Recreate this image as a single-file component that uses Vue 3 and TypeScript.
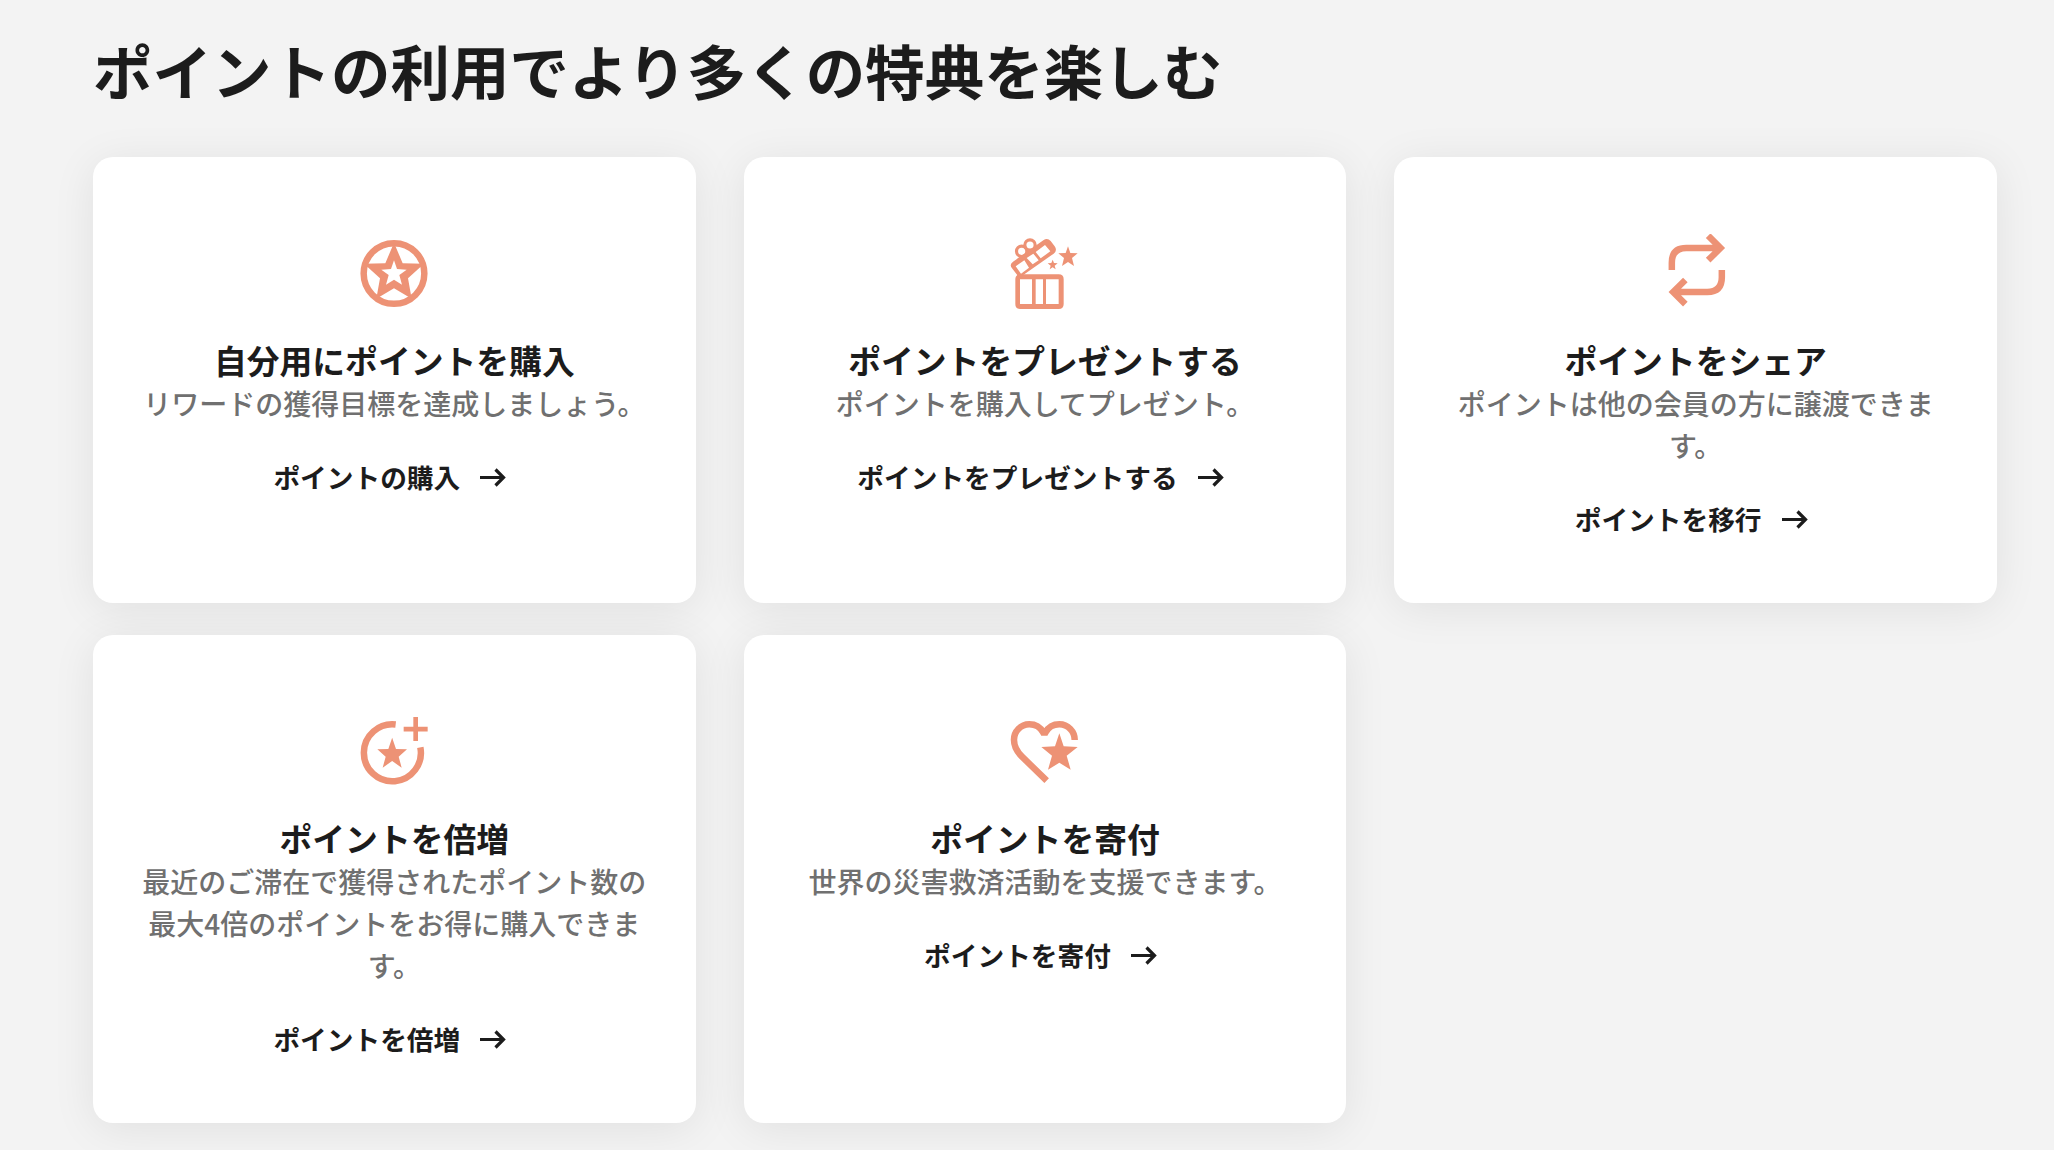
<script setup lang="ts">
type IconName = 'star' | 'gift' | 'share' | 'boost' | 'donate'

interface Benefit {
  icon: IconName
  viewBox: string
  title: string
  body: string
  link: string
}

const benefits: Benefit[] = [
  { icon: 'star', viewBox: '43 42 240 240', title: '自分用にポイントを購入', body: 'リワードの獲得目標を達成しましょう。', link: 'ポイントの購入' },
  { icon: 'gift', viewBox: '45 42 240 240', title: 'ポイントをプレゼントする', body: 'ポイントを購入してプレゼント。', link: 'ポイントをプレゼントする' },
  { icon: 'share', viewBox: '48 42 240 240', title: 'ポイントをシェア', body: 'ポイントは他の会員の方に譲渡できます。', link: 'ポイントを移行' },
  { icon: 'boost', viewBox: '43 36 240 240', title: 'ポイントを倍増', body: '最近のご滞在で獲得されたポイント数の最大4倍のポイントをお得に購入できます。', link: 'ポイントを倍増' },
  { icon: 'donate', viewBox: '45 36 240 240', title: 'ポイントを寄付', body: '世界の災害救済活動を支援できます。', link: 'ポイントを寄付' },
]
</script>

<template>
  <main class="page" lang="ja">
    <h1 class="heading">ポイントの利用でより多くの特典を楽しむ</h1>
    <div class="grid">
      <section v-for="b in benefits" :key="b.title" class="card">
        <svg class="icon" :viewBox="b.viewBox" aria-hidden="true">
          <g v-if="b.icon === 'star'">
            <circle class="line" cx="163" cy="160.5" r="91" />
            <path class="solid" fill-rule="evenodd" d="M163 68L189 130L253 131L205 175L216 236L163 205L110 236L121 175L73 131L137 130ZM163 121L154 147L125 149L147 165L139 194L163 179L187 194L179 165L201 149L172 147Z" />
          </g>
          <g v-else-if="b.icon === 'gift'">
            <path class="solid" fill-rule="evenodd" d="M90 163H206Q221 163 221 178V252Q221 267 206 267H90Q76 267 76 252V178Q76 163 90 163ZM90 178V252H126V178ZM137 178V252H159V178ZM168 178V252H206V178Z" />
            <path class="solid" fill-rule="evenodd" d="M69 125L160 61Q172 52 182 63L194 79Q203 92 191 101L88 173L66 145Q57 134 69 125ZM77 139L93 161L117 143L103 121ZM110 114L128 133L146 121L130 101ZM137 96L152 115L181 94L165 75Z" />
            <circle class="line ribbon" cx="95" cy="94" r="15.5" />
            <circle class="line ribbon" cx="120" cy="75" r="15.5" />
            <path class="solid" d="M234 79L241 99L263 100L246 114L252 138L234 126L216 138L222 114L205 100L227 99Z" />
            <path class="solid" d="M188 119L192 129L203 130L194 137L197 148L188 142L179 148L182 137L173 130L184 129Z" />
          </g>
          <g v-else-if="b.icon === 'share'">
            <path class="line" d="M95.500 150V128Q95.500 84 139 84H242M204.500 47L241.500 84L204.500 120.500" />
            <path class="line" d="M245.500 150V172Q245.500 216 202 216H100M136 180L99.500 216L136 252.500" />
          </g>
          <g v-else-if="b.icon === 'boost'">
            <path class="line" d="M168 73.500A85.500 85.500 0 1 0 242 142" />
            <path class="solid" d="M157.500 113L169 147L202 148L177 170L186 203L157.500 183L129 203L138 170L113 148L146 147Z" />
            <path class="solid" d="M221 51H235V80.500H264V94.500H235V123H221V94.500H192V80.500H221Z" />
          </g>
          <g v-else>
            <path class="line" d="M170 242L96 170C80 154 72 139 72 120A46 46 0 0 1 118 73C138 73 151 82 159.500 97.500H166.500C175 82 188 73 208 73A46 46 0 0 1 254 120" />
            <path class="solid" d="M208 100L221 139L263 141L230 167L242 209L208 188L174 209L186 167L154 141L195 139Z" />
          </g>
        </svg>
        <h2 class="title">{{ b.title }}</h2>
        <p class="body">{{ b.body }}</p>
        <a class="link">
          <span>{{ b.link }}</span>
          <svg class="arrow" viewBox="0 0 39 40" aria-hidden="true">
            <path d="M4 20.500H27.500M19.500 12.500L27.500 20.500L19.500 28.500" />
          </svg>
        </a>
      </section>
    </div>
  </main>
</template>

<style>
body {
  background: #f3f3f3;
}
</style>

<style scoped>
.page {
  box-sizing: border-box;
  height: 1150px;
  overflow: hidden;
  padding: 29px 57px 0 93px;
  background: #f3f3f3;
  color: #1c1c1c;
  font-family: "Noto Sans CJK JP", sans-serif;
}
.heading {
  margin: 0 0 48px;
  font-size: 59.5px;
  line-height: 80px;
  font-weight: 700;
}
.grid {
  display: grid;
  grid-template-columns: repeat(3, 1fr);
  gap: 32px 48px;
}
.card {
  display: flex;
  flex-direction: column;
  align-items: center;
  padding: 77px 40px 64.5px;
  border-radius: 20px;
  background: #fff;
  box-shadow: 0 6px 44px rgba(0, 0, 0, 0.08);
  text-align: center;
}
.icon {
  width: 80px;
  height: 80px;
  margin-bottom: 23px;
}
.solid {
  fill: #ed9275;
}
.line {
  fill: none;
  stroke: #ed9275;
  stroke-width: 19.5;
}
.ribbon {
  stroke-width: 9.5;
}
.title {
  margin: 0;
  font-size: 32.8px;
  line-height: 45px;
  font-weight: 700;
}
.body {
  margin: 0 0 32.5px;
  color: #707070;
  font-size: 28px;
  line-height: 42px;
  font-weight: 500;
}
.link {
  display: flex;
  align-items: center;
  gap: 16px;
  font-size: 26.7px;
  line-height: 40px;
  font-weight: 700;
}
.arrow {
  width: 39px;
  height: 40px;
  fill: none;
  stroke: #1c1c1c;
  stroke-width: 3.2;
}
</style>
